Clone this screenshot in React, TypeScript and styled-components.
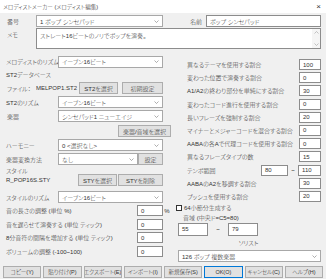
import styled, { createGlobalStyle } from 'styled-components';

const Global = createGlobalStyle`
  html, body { margin: 0; padding: 0; background: #f0f0f0; }
  body {
    font-family: "Liberation Sans", "Noto Sans CJK JP", sans-serif;
    font-size: 6px;
    font-weight: 300;
    color: #333;
    font-feature-settings: "palt" 1;
  }
  * { box-sizing: border-box; }
`;

const Window = styled.div`
  width: 326px;
  height: 279px;
  display: flex;
  flex-direction: column;
  background: #f0f0f0;
  overflow: hidden;
  white-space: nowrap;
`;

const TitleBar = styled.div`
  height: 13px;
  background: #fff;
  display: flex;
  align-items: center;
  justify-content: space-between;
  padding: 0 5px 0 3px;
  font-size: 5.6px;
`;

const Close = styled.span`
  font-size: 8px;
  color: #333;
`;

const Body = styled.div`
  flex: 1;
  display: flex;
  flex-direction: column;
  padding: 2px 5px 0 5px;
`;

const Row = styled.div<{ $h?: number; $mt?: number; $pl?: number }>`
  display: flex;
  align-items: center;
  height: ${(p) => p.$h ?? 12}px;
  margin-top: ${(p) => p.$mt ?? 0}px;
  padding-left: ${(p) => p.$pl ?? 0}px;
`;

const Label = styled.span<{ $w?: number; $pl?: number }>`
  width: ${(p) => (p.$w ? `${p.$w}px` : 'auto')};
  flex: ${(p) => (p.$w ? 'none' : '1')};
  padding-left: ${(p) => p.$pl ?? 1}px;
  overflow: hidden;
`;

const Field = styled.div<{ $w?: number; $h?: number }>`
  width: ${(p) => (p.$w ? `${p.$w}px` : 'auto')};
  flex: ${(p) => (p.$w ? 'none' : '1')};
  height: ${(p) => p.$h ?? 12}px;
  border: 1px solid #8c8c8c;
  background: #fff;
  display: flex;
  align-items: center;
  padding-left: 3px;
  overflow: hidden;
`;

const SelectBox = styled(Field)`
  justify-content: space-between;
  padding-right: 3px;
  border-color: #a8a8a8;
`;

const Button = styled.div<{ $w?: number; $default?: boolean }>`
  width: ${(p) => (p.$w ? `${p.$w}px` : 'auto')};
  flex: none;
  height: 12px;
  background: #e1e1e1;
  border: 1px solid ${(p) => (p.$default ? '#0078d7' : '#adadad')};
  display: flex;
  align-items: center;
  justify-content: center;
  overflow: hidden;
`;

const Memo = styled(Field)`
  height: 21px;
  align-items: stretch;
  padding: 0 0 0 3px;
`;

const MemoText = styled.div`
  flex: 1;
  padding-top: 2px;
`;

const ScrollBar = styled.div`
  width: 8px;
  background: #f5f5f5;
  display: flex;
  flex-direction: column;
  justify-content: space-between;
  align-items: center;
  padding: 2px 0;
`;

const Columns = styled.div`
  display: flex;
  margin-top: 3px;
`;

const LeftCol = styled.div`
  width: 166px;
  display: flex;
  flex-direction: column;
  padding-top: 3px;
`;

const RightCol = styled.div`
  flex: 1;
  display: flex;
  flex-direction: column;
  padding-top: 7px;
  padding-left: 5px;
`;

const RightRow = styled(Row)`
  height: 11px;
  margin-top: 2.2px;
  padding-left: 10px;
  &:first-child { margin-top: 0; }
`;

const Spacer = styled.div<{ $w: number }>`
  width: ${(p) => p.$w}px;
  flex: none;
  text-align: center;
`;

const Check = styled.span`
  width: 6px;
  height: 6px;
  border: 1px solid #333;
  background: #fff;
  margin-right: 2px;
`;

const Center = styled.div<{ $h: number; $mt: number }>`
  height: ${(p) => p.$h}px;
  margin-top: ${(p) => p.$mt}px;
  display: flex;
  align-items: center;
  justify-content: center;
`;

const ButtonBar = styled.div`
  display: grid;
  grid-template-columns: repeat(8, 1fr);
  gap: 2px;
  margin: 3px -2px 0 -2px;
  font-size: 5.5px;
`;

function Chevron() {
  return (
    <svg width="5" height="3" viewBox="0 0 5 3">
      <path d="M0.5 0.5 L2.5 2.5 L4.5 0.5" fill="none" stroke="#777" strokeWidth="0.6" />
    </svg>
  );
}

function Select({ w, text }: { w?: number; text: string }) {
  return (
    <SelectBox $w={w}>
      <span>{text}</span>
      <Chevron />
    </SelectBox>
  );
}

const rightRows: [string, string][] = [
  ['異なるテーマを使用する割合', '100'],
  ['変わった位置で演奏する割合', '0'],
  ['A1/A2の終わり部分を単純にする割合', '30'],
  ['変わったコード進行を使用する割合', '0'],
  ['長いフレーズを強制する割合', '20'],
  ['マイナーとメジャーコードを混合する割合', '0'],
  ['AABAの各Aで代理コードを使用する割合', '0'],
  ['異なるフレーズタイプの数', '15'],
];

const leftInputs: [string, string, number][] = [
  ['音を遅らせて演奏する (単位 ティック)', '0', 3],
  ['8分音符の間隔を増加する (単位 ティック)', '0', 2],
  ['ボリュームの調整 (-100~100)', '0', 3],
];

const buttons = ['コピー(Y)', '貼り付け(P)', 'エクスポート(E)', 'インポート(I)', '新規保存(S)', 'OK(O)', 'キャンセル(C)', 'ヘルプ(H)'];

export default function App() {
  return (
    <Window>
      <Global />
      <TitleBar>
        <span>メロディストメーカー (メロディスト編集)</span>
        <Close>×</Close>
      </TitleBar>
      <Body>
        <Row $h={12} $mt={0}>
          <Label $w={31} $pl={2}>番号</Label>
          <Select w={127} text="1 ポップ シンセパッド" />
          <Label $w={43} $pl={27}>名前</Label>
          <Field>ポップ シンセパッド</Field>
        </Row>
        <Row $h={21} $mt={1}>
          <Label $w={31} $pl={2} style={{ alignSelf: 'flex-start', paddingTop: 2 }}>メモ</Label>
          <Memo>
            <MemoText>ストレート16ビートのノリでポップを演奏。</MemoText>
            <ScrollBar>
              <svg width="5" height="3" viewBox="0 0 5 3">
                <path d="M0.5 2.5 L2.5 0.5 L4.5 2.5" fill="none" stroke="#aaa" strokeWidth="0.7" />
              </svg>
              <svg width="5" height="3" viewBox="0 0 5 3">
                <path d="M0.5 0.5 L2.5 2.5 L4.5 0.5" fill="none" stroke="#aaa" strokeWidth="0.7" />
              </svg>
            </ScrollBar>
          </Memo>
        </Row>
        <Columns>
          <LeftCol>
            <Row $h={13}>
              <Label $w={53}>メロディストのリズム</Label>
              <Select w={105} text="イーブン16ビート" />
            </Row>
            <Row $h={11} $mt={1}>
              <Label>ST2データベース</Label>
            </Row>
            <Row $mt={2}>
              <Label $w={31} $pl={2}>ファイル：</Label>
              <Label $w={43} $pl={0}>MELPOP1.ST2</Label>
              <Button $w={39}>ST2を選択</Button>
              <Spacer $w={4} />
              <Button $w={41}>初期設定</Button>
            </Row>
            <Row $mt={2}>
              <Label $w={53}>ST2のリズム</Label>
              <Select w={105} text="イーブン16ビート" />
            </Row>
            <Row $mt={2}>
              <Label $w={53} $pl={2}>楽器</Label>
              <Select w={105} text="シンセパッド1 ニューエイジ" />
            </Row>
            <Row $mt={3}>
              <Label />
              <Button $w={53}>楽器/音域を選択</Button>
            </Row>
            <Row $mt={2}>
              <Label $w={53}>ハーモニー</Label>
              <Select w={105} text="0 <選択なし>" />
            </Row>
            <Row $mt={2}>
              <Label $w={53}>楽器変換方法</Label>
              <Select w={80} text="なし" />
              <Button $w={25}>設定</Button>
            </Row>
            <Row $h={8} $mt={1}>
              <Label>スタイル</Label>
            </Row>
            <Row $mt={0}>
              <Label $w={73}>R_POP16S.STY</Label>
              <Button $w={39}>STYを選択</Button>
              <Spacer $w={1} />
              <Button $w={45}>STYを削除</Button>
            </Row>
            <Row $mt={5}>
              <Label $w={53}>スタイルのリズム</Label>
              <Select w={105} text="イーブン16ビート" />
            </Row>
            <Row $h={11} $mt={2}>
              <Label>音の長さの調整 (単位 %)</Label>
              <Field $w={26} $h={11}>0</Field>
              <Spacer $w={8}>%</Spacer>
            </Row>
            {leftInputs.map(([label, value, mt]) => (
              <Row key={label} $h={11} $mt={mt}>
                <Label>{label}</Label>
                <Field $w={26} $h={11}>{value}</Field>
                <Spacer $w={8} />
              </Row>
            ))}
          </LeftCol>
          <RightCol>
            {rightRows.map(([label, value]) => (
              <RightRow key={label}>
                <Label>{label}</Label>
                <Field $w={22} $h={11}>{value}</Field>
              </RightRow>
            ))}
            <RightRow>
              <Label>テンポ範囲</Label>
              <Field $w={27} $h={11}>80</Field>
              <Spacer $w={10}>~</Spacer>
              <Field $w={23} $h={11}>110</Field>
            </RightRow>
            <RightRow>
              <Label>AABAのA2を移調する割合</Label>
              <Field $w={22} $h={11}>30</Field>
            </RightRow>
            <RightRow>
              <Label>プッシュを使用する割合</Label>
              <Field $w={22} $h={11}>20</Field>
            </RightRow>
            <Row $h={10} $mt={1}>
              <Check />
              <span>64小節分生成する</span>
            </Row>
            <Row $h={8} $mt={1} $pl={7}>
              <span>音域 (中央ド=C5=80)</span>
            </Row>
            <Row $h={13} $mt={1} $pl={2}>
              <Field $w={30} $h={13}>55</Field>
              <Spacer $w={20}>~</Spacer>
              <Field $w={30} $h={13}>79</Field>
            </Row>
            <Center $h={9} $mt={2}>ソリスト</Center>
            <Row $h={13} $mt={3} $pl={2}>
              <Select text="126 ポップ 複数楽器" />
            </Row>
          </RightCol>
        </Columns>
        <ButtonBar>
          {buttons.map((b) => (
            <Button key={b} $default={b === 'OK(O)'}>{b}</Button>
          ))}
        </ButtonBar>
      </Body>
    </Window>
  );
}
